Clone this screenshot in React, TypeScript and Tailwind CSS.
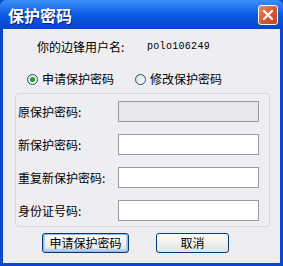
const cjk = { fontFamily: '"Noto Sans CJK SC", "Noto Sans", sans-serif' };

function Radio({ checked, label }: { checked?: boolean; label: string }) {
  return (
    <label className="flex items-center gap-[4px]">
      <span className="flex h-[11px] w-[11px] items-center justify-center rounded-full border border-[#1c5180] bg-gradient-to-br from-[#dcdad5] to-white">
        {checked && <span className="h-[5px] w-[5px] rounded-full bg-[#21a121]" />}
      </span>
      <span className="text-[12px] leading-[16px] text-black">{label}</span>
    </label>
  );
}

function Field({ label, disabled }: { label: string; disabled?: boolean }) {
  return (
    <div className="flex items-center">
      <span className="w-[100px] text-[12px] leading-[16px] text-black">{label}</span>
      <div
        className={
          'h-[21px] w-[141px] border border-[#9a9a9a] ' + (disabled ? 'bg-[#e8e7ec]' : 'bg-white')
        }
      />
    </div>
  );
}

export default function App() {
  return (
    <div className="flex h-[266px] w-[283px] flex-col bg-[#0a48d0]" style={cjk}>
      {/* title bar */}
      <div className="flex h-[29px] items-center justify-between rounded-t-[6px] bg-gradient-to-b from-[#3d8ff5] via-[#0a5ae6] to-[#0846c8] pl-[8px] pr-[5px]">
        <span className="text-[16px] font-bold leading-[20px] text-white [text-shadow:1px_1px_0_#0a1e6e]">
          保护密码
        </span>
        <div className="flex h-[20px] w-[20px] items-center justify-center rounded-[3px] border border-white bg-gradient-to-br from-[#e88a6a] via-[#d95a35] to-[#c8401c]">
          <svg width="12" height="12" viewBox="0 0 12 12">
            <path d="M2 2 L10 10 M10 2 L2 10" stroke="white" strokeWidth="2.2" strokeLinecap="round" />
          </svg>
        </div>
      </div>

      {/* body */}
      <div className="mx-[3px] mb-[3px] flex flex-1 flex-col bg-[#eeedf2]">
        <div className="flex items-center pl-[34px] pt-[10px]">
          <span className="w-[110px] text-[12px] leading-[16px] text-black">你的边锋用户名:</span>
          <span className="text-[10px] leading-[16px] tracking-[0.3px] text-black" style={{ fontFamily: '"Liberation Mono", monospace' }}>
            polo106249
          </span>
        </div>

        <div className="flex items-center gap-[21px] pl-[24px] pt-[16px]">
          <Radio checked label="申请保护密码" />
          <Radio label="修改保护密码" />
        </div>

        <div className="ml-[12px] mr-[10px] mt-[6px] flex flex-col gap-[12px] rounded-[4px] border border-[#d8d8dc] pb-[5px] pl-[2px] pt-[7px]">
          <Field label="原保护密码:" disabled />
          <Field label="新保护密码:" />
          <Field label="重复新保护密码:" />
          <Field label="身份证号码:" />
        </div>

        <div className="flex gap-[27px] pl-[39px] pt-[6px]">
          <button className="h-[20px] w-[87px] rounded-[3px] border border-[#003c74] bg-gradient-to-b from-white to-[#e3e2dc] text-[12px] leading-[16px] text-black shadow-[inset_0_0_0_1px_#9cb8e8,inset_0_-1px_0_2px_#b8cff5]">
            申请保护密码
          </button>
          <button className="h-[20px] w-[73px] rounded-[3px] border border-[#003c74] bg-gradient-to-b from-white to-[#e3e2dc] text-[12px] leading-[16px] text-black">
            取消
          </button>
        </div>
      </div>
    </div>
  );
}
